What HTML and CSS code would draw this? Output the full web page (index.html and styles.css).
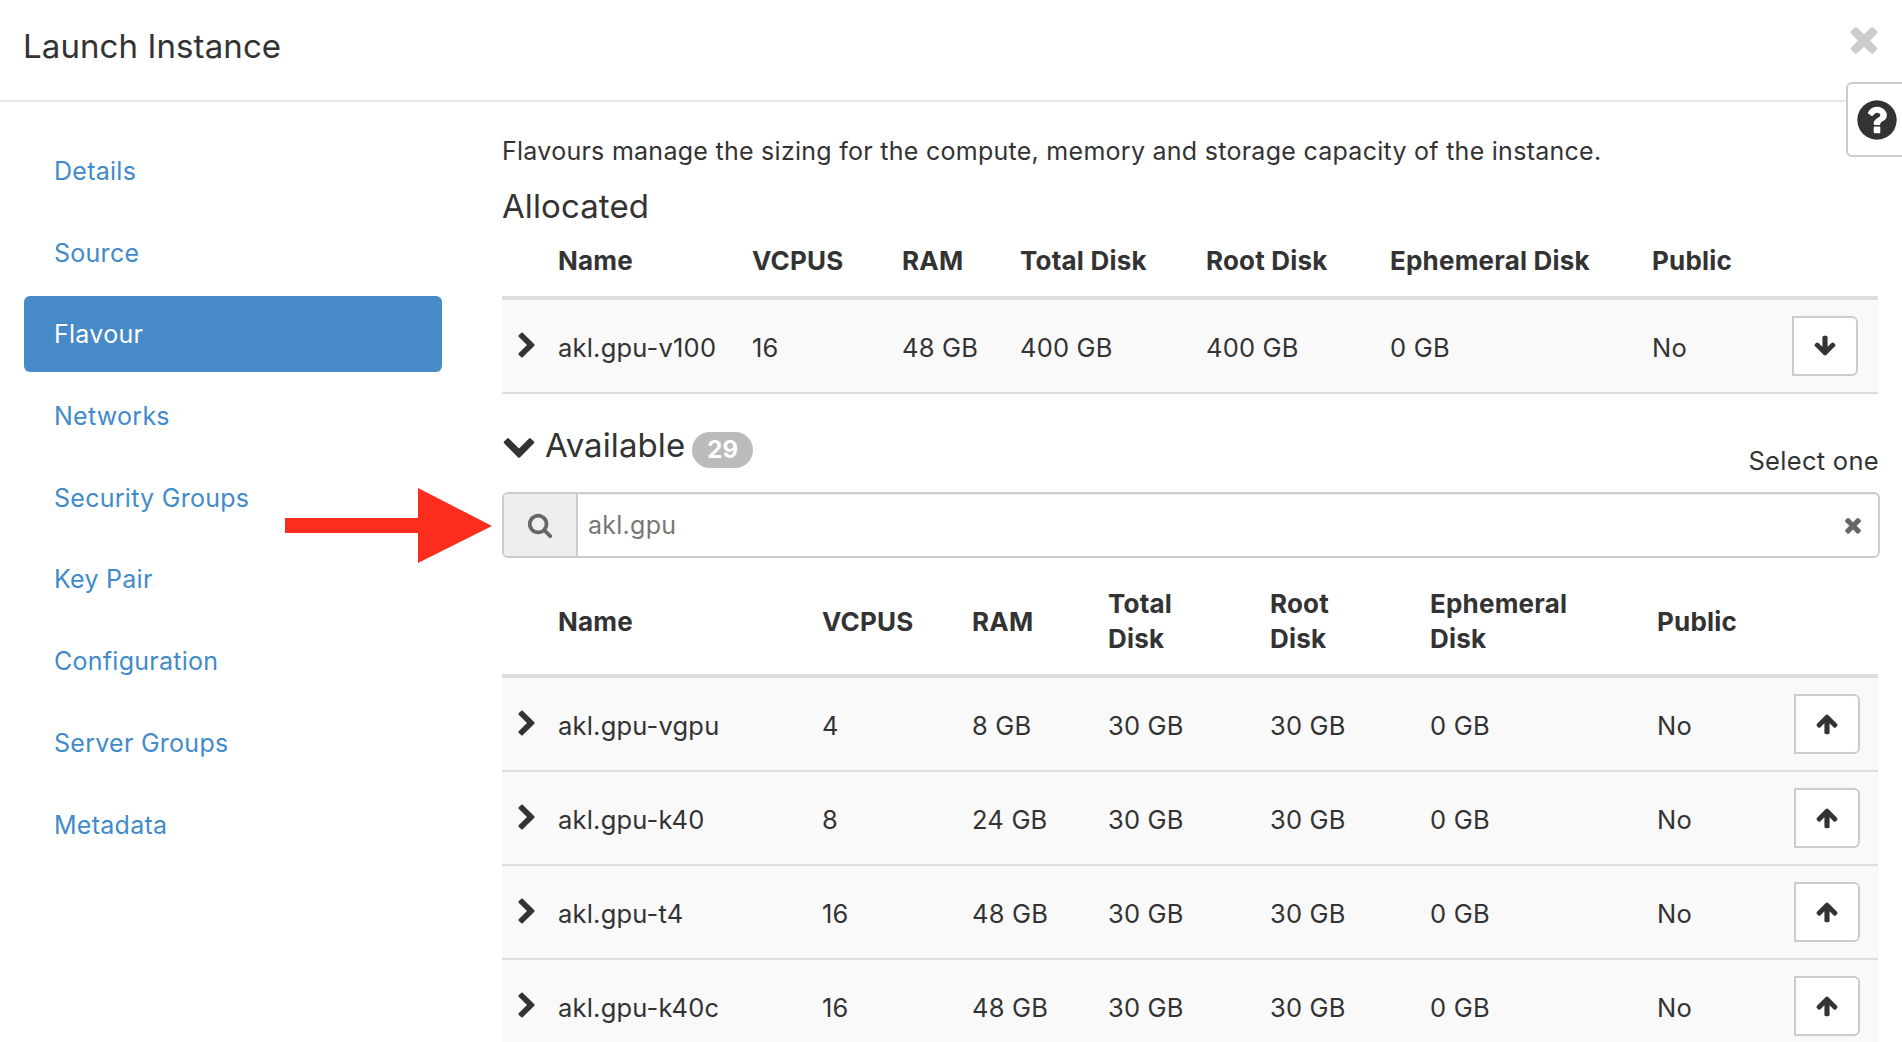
FILE: index.html
```html
<!DOCTYPE html>
<html lang="en">
<head>
    <meta charset="UTF-8">
    <meta name="viewport" content="width=device-width, initial-scale=1.0">
    <title>Launch Instance</title>
    <link rel="stylesheet" href="styles.css">
</head>
<body>
    <svg class="defs" aria-hidden="true">
        <symbol id="i-right" viewBox="0 0 1792 1792"><path d="M1363 877l-742 742q-19 19-45 19t-45-19l-166-166q-19-19-19-45t19-45l531-531-531-531q-19-19-19-45t19-45l166-166q19-19 45-19t45 19l742 742q19 19 19 45t-19 45z"/></symbol>
        <symbol id="i-down" viewBox="0 0 1792 1792"><path d="M1683 808l-742 741q-19 19-45 19t-45-19l-742-741q-19-19-19-45.5t19-45.5l166-165q19-19 45-19t45 19l531 531 531-531q19-19 45-19t45 19l166 165q19 19 19 45.5t-19 45.5z"/></symbol>
        <symbol id="i-times" viewBox="0 0 1792 1792"><path d="M1490 1322q0 40-28 68l-136 136q-28 28-68 28t-68-28l-294-294-294 294q-28 28-68 28t-68-28l-136-136q-28-28-28-68t28-68l294-294-294-294q-28-28-28-68t28-68l136-136q28-28 68-28t68 28l294 294 294-294q28-28 68-28t68 28l136 136q28 28 28 68t-28 68l-294 294 294 294q28 28 28 68z"/></symbol>
        <symbol id="i-up-arrow" viewBox="0 0 1792 1792"><path d="M1675 971q0 51-37 90l-75 75q-38 38-91 38-54 0-90-38l-294-293v704q0 52-37.5 84.5t-90.5 32.5h-128q-53 0-90.5-32.5t-37.5-84.5v-704l-294 293q-36 38-90 38t-90-38l-75-75q-38-38-38-90 0-53 38-91l651-651q35-37 90-37 54 0 91 37l651 651q37 39 37 91z"/></symbol>
        <symbol id="i-down-arrow" viewBox="0 0 1792 1792"><path d="M1675 832q0 53-37 90l-651 652q-39 37-91 37-53 0-90-37l-651-652q-38-36-38-90 0-53 38-91l74-75q39-37 91-37 53 0 90 37l294 294v-704q0-52 38-90t90-38h128q52 0 90 38t38 90v704l294-294q37-37 90-37 52 0 91 37l75 75q37 39 37 91z"/></symbol>
        <symbol id="i-search" viewBox="0 0 1792 1792"><path d="M1216 832q0-185-131.5-316.5t-316.5-131.5-316.5 131.5-131.5 316.5 131.5 316.5 316.5 131.5 316.5-131.5 131.5-316.5zm512 832q0 52-38 90t-90 38q-54 0-90-38l-343-342q-179 124-399 124-143 0-273.5-55.5t-225-150-150-225-55.5-273.5 55.5-273.5 150-225 225-150 273.5-55.5 273.5 55.5 225 150 150 225 55.5 273.5q0 220-124 399l343 343q37 37 37 90z"/></symbol>
        <symbol id="i-help" viewBox="0 0 1792 1792"><path d="M1024 1376v-192q0-14-9-23t-23-9h-192q-14 0-23 9t-9 23v192q0 14 9 23t23 9h192q14 0 23-9t9-23zm256-672q0-88-55.5-163t-138.5-116-170-41q-243 0-371 213-15 24 8 42l132 100q7 6 19 6 16 0 25-12 53-68 86-92 34-24 86-24 48 0 85.5 26t37.5 59q0 38-20 61t-68 45q-63 28-115.5 86.5t-52.5 125.5v36q0 14 9 23t23 9h192q14 0 23-9t9-23q0-19 21.5-49.5t54.5-49.5q32-18 49-28.5t46-35 44.5-48 28-60.5 12.5-81zm384 192q0 209-103 385.5t-279.5 279.5-385.5 103-385.5-103-279.5-279.5-103-385.5 103-385.5 279.5-279.5 385.5-103 385.5 103 279.5 279.5 103 385.5z"/></symbol>
    </svg>

    <header class="modal-header">
        <h1>Launch Instance</h1>
        <svg class="close-icon"><use href="#i-times"/></svg>
    </header>

    <div class="help-tab"><svg class="help-icon"><use href="#i-help"/></svg></div>

    <div class="modal-body">
        <nav class="steps">
            <a href="#">Details</a>
            <a href="#">Source</a>
            <a href="#" class="active">Flavour</a>
            <a href="#">Networks</a>
            <a href="#">Security Groups</a>
            <a href="#">Key Pair</a>
            <a href="#">Configuration</a>
            <a href="#">Server Groups</a>
            <a href="#">Metadata</a>
        </nav>

        <main class="content">
            <p class="intro">Flavours manage the sizing for the compute, memory and storage capacity of the instance.</p>
            <h2 class="allocated-title">Allocated</h2>

            <table class="flavours allocated">
                <colgroup>
                    <col class="c-toggle"><col class="c-name"><col class="c-vcpus"><col class="c-ram"><col class="c-total"><col class="c-root"><col class="c-eph"><col class="c-public"><col>
                </colgroup>
                <thead>
                    <tr><th></th><th>Name</th><th>VCPUS</th><th>RAM</th><th>Total Disk</th><th>Root Disk</th><th>Ephemeral Disk</th><th>Public</th><th></th></tr>
                </thead>
                <tbody>
                    <tr>
                        <td><svg class="row-toggle"><use href="#i-right"/></svg></td>
                        <td>akl.gpu-v100</td><td>16</td><td>48 GB</td><td>400 GB</td><td>400 GB</td><td>0 GB</td><td>No</td>
                        <td><button class="move-btn"><svg><use href="#i-down-arrow"/></svg></button></td>
                    </tr>
                </tbody>
            </table>

            <div class="available-head">
                <h2 class="available-title">
                    <svg class="section-toggle"><use href="#i-down"/></svg>
                    Available
                    <span class="badge">29</span>
                </h2>
                <span class="select-hint">Select one</span>
            </div>

            <div class="search-group">
                <span class="search-addon"><svg><use href="#i-search"/></svg></span>
                <input class="search-input" type="text" value="akl.gpu">
                <svg class="search-clear"><use href="#i-times"/></svg>
            </div>

            <table class="flavours available">
                <colgroup>
                    <col class="c-toggle"><col class="c-name"><col class="c-vcpus"><col class="c-ram"><col class="c-total"><col class="c-root"><col class="c-eph"><col class="c-public"><col>
                </colgroup>
                <thead>
                    <tr><th></th><th>Name</th><th>VCPUS</th><th>RAM</th><th>Total<br>Disk</th><th>Root<br>Disk</th><th>Ephemeral<br>Disk</th><th>Public</th><th></th></tr>
                </thead>
                <tbody>
                    <tr>
                        <td><svg class="row-toggle"><use href="#i-right"/></svg></td>
                        <td>akl.gpu-vgpu</td><td>4</td><td>8 GB</td><td>30 GB</td><td>30 GB</td><td>0 GB</td><td>No</td>
                        <td><button class="move-btn"><svg><use href="#i-up-arrow"/></svg></button></td>
                    </tr>
                    <tr>
                        <td><svg class="row-toggle"><use href="#i-right"/></svg></td>
                        <td>akl.gpu-k40</td><td>8</td><td>24 GB</td><td>30 GB</td><td>30 GB</td><td>0 GB</td><td>No</td>
                        <td><button class="move-btn"><svg><use href="#i-up-arrow"/></svg></button></td>
                    </tr>
                    <tr>
                        <td><svg class="row-toggle"><use href="#i-right"/></svg></td>
                        <td>akl.gpu-t4</td><td>16</td><td>48 GB</td><td>30 GB</td><td>30 GB</td><td>0 GB</td><td>No</td>
                        <td><button class="move-btn"><svg><use href="#i-up-arrow"/></svg></button></td>
                    </tr>
                    <tr>
                        <td><svg class="row-toggle"><use href="#i-right"/></svg></td>
                        <td>akl.gpu-k40c</td><td>16</td><td>48 GB</td><td>30 GB</td><td>30 GB</td><td>0 GB</td><td>No</td>
                        <td><button class="move-btn"><svg><use href="#i-up-arrow"/></svg></button></td>
                    </tr>
                </tbody>
            </table>
        </main>
    </div>

    <!-- red annotation arrow pointing at the filter box -->
    <svg class="callout" viewBox="0 0 207 75"><path d="M0 30H133V0L207 38L133 75V45H0z"/></svg>
</body>
</html>
```

FILE: styles.css
```css
html, body {
    height: 100%;
}

body {
    font-family: Inter, "Liberation Sans", sans-serif;
    font-size: 25px;
    letter-spacing: 0.27px;
    color: #333;
    background-color: #fff;
    margin: 0;
    overflow: hidden;
    position: relative;
}

.defs {
    display: none;
}

svg {
    fill: currentColor;
}

.modal-header {
    height: 100px;
    border-bottom: 2px solid #e5e5e5;
    padding: 0 24px 0 23px;
    display: flex;
    justify-content: space-between;
}

.modal-header h1 {
    font-size: 33px;
    font-weight: 400;
    letter-spacing: 0.1px;
    line-height: 92px;
    margin: 0;
}

.close-icon {
    width: 40px;
    height: 40px;
    margin: 19px -6px 0 0;
    color: #ccc;
}

.help-tab {
    position: absolute;
    top: 82px;
    left: 1846px;
    width: 70px;
    height: 75px;
    box-sizing: border-box;
    background-color: #fff;
    border: 2px solid #ccc;
    border-radius: 6px;
    padding: 13px 0 0 6px;
}

.help-icon {
    display: block;
    width: 46px;
    height: 46px;
    color: #333;
}

.modal-body {
    display: flex;
    gap: 60px;
    padding: 31px 24px 0;
}

.steps {
    width: 418px;
    flex-shrink: 0;
    display: flex;
    flex-direction: column;
    gap: 5.7px;
}

.steps a {
    height: 76px;
    line-height: 77px;
    padding-left: 30px;
    border-radius: 6px;
    color: #428bca;
    text-decoration: none;
}

.steps a.active {
    background-color: #468ac8;
    color: #fff;
}

.content {
    flex: 1;
    min-width: 0;
}

.intro {
    line-height: 36px;
    margin: 0;
}

h2 {
    font-size: 33px;
    font-weight: 400;
    letter-spacing: 0.1px;
    line-height: 40px;
    margin: 0;
}

.allocated-title {
    margin-top: 17px;
}

.flavours {
    width: 100%;
    border-collapse: collapse;
    table-layout: fixed;
}

.flavours th {
    text-align: left;
    font-size: 26px;
    font-weight: 700;
    letter-spacing: 0.2px;
    padding: 0 0 1px;
    line-height: 35px;
    border-bottom: 4px solid #ddd;
}

.flavours td {
    font-size: 25.5px;
    letter-spacing: 0.2px;
    padding: 2px 0 0;
    height: 90px;
    background-color: #f9f9f9;
    border-bottom: 2px solid #ddd;
}

.allocated th {
    height: 69px;
}

.available th {
    height: 104px;
}

.available {
    margin-top: 11px;
}

.c-toggle {
    width: 56px;
}

.allocated .c-name { width: 194px; }
.allocated .c-vcpus { width: 150px; }
.allocated .c-ram { width: 118px; }
.allocated .c-total { width: 186px; }
.allocated .c-root { width: 184px; }
.allocated .c-eph { width: 262px; }
.allocated .c-public { width: 140px; }

.available .c-name { width: 264px; }
.available .c-vcpus { width: 150px; }
.available .c-ram { width: 136px; }
.available .c-total { width: 162px; }
.available .c-root { width: 160px; }
.available .c-eph { width: 227px; }
.available .c-public { width: 137px; }

.row-toggle {
    display: block;
    width: 28px;
    height: 28px;
    margin: -2px 0 0 11px;
}

.move-btn {
    display: block;
    width: 66px;
    height: 60px;
    margin-top: -2px;
    padding: 0;
    background-color: #fff;
    border: 2px solid #ccc;
    border-radius: 0 6px 6px 0;
    color: #333;
}

.move-btn svg {
    display: block;
    width: 24px;
    height: 24px;
    margin: 0 auto;
}

.available-head {
    display: flex;
    justify-content: space-between;
    align-items: flex-end;
    height: 53px;
    margin-top: 31px;
    margin-bottom: 14px;
}

.available-title {
    align-self: flex-start;
    display: flex;
    align-items: flex-start;
}

.section-toggle {
    width: 34px;
    height: 34px;
    margin: 3px 9px 0 0;
}

.badge {
    font-size: 24px;
    font-weight: 700;
    line-height: 36px;
    color: #fff;
    background-color: #bbb;
    border-radius: 18px;
    padding: 0 15px;
    margin: 7px 0 0 7px;
}

.select-hint {
    font-size: 25.5px;
    letter-spacing: 0.3px;
    line-height: 34px;
    margin-right: -1px;
}

.search-group {
    display: flex;
    align-items: center;
    height: 66px;
    box-sizing: border-box;
    margin-right: -2px;
    border: 2px solid #ccc;
    border-radius: 6px;
    background-color: #fff;
    box-shadow: inset 0 1px 1px rgba(0, 0, 0, 0.075);
}

.search-addon {
    width: 72px;
    height: 100%;
    flex-shrink: 0;
    display: flex;
    align-items: center;
    justify-content: center;
    background-color: #eee;
    border-right: 2px solid #ccc;
    border-radius: 4px 0 0 4px;
    color: #666;
}

.search-addon svg {
    width: 26px;
    height: 26px;
}

.search-input {
    flex: 1;
    min-width: 0;
    border: none;
    outline: none;
    background: none;
    font: inherit;
    letter-spacing: inherit;
    color: #777;
    padding: 0 10px;
}

.search-clear {
    width: 24px;
    height: 24px;
    margin-right: 13px;
    color: #666;
}

.callout {
    position: absolute;
    left: 285px;
    top: 488px;
    width: 207px;
    height: 75px;
    fill: #fc2d1e;
}
```
